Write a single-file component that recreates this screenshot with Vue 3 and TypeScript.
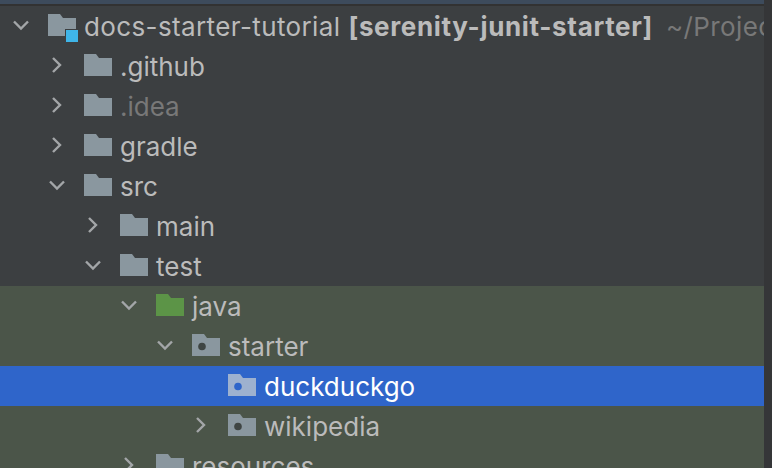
<script setup lang="ts">
type Kind = 'module' | 'folder' | 'source' | 'package'
interface Row {
  depth: number
  arrow: 'open' | 'closed' | 'none'
  kind: Kind
  name: string
  tone?: 'dim' | 'sel'
  tint?: boolean
  tag?: string
  path?: string
}
const rows: Row[] = [
  { depth: 0, arrow: 'open', kind: 'module', name: 'docs-starter-tutorial', tag: '[serenity-junit-starter]', path: '~/Projects/docs' },
  { depth: 1, arrow: 'closed', kind: 'folder', name: '.github' },
  { depth: 1, arrow: 'closed', kind: 'folder', name: '.idea', tone: 'dim' },
  { depth: 1, arrow: 'closed', kind: 'folder', name: 'gradle' },
  { depth: 1, arrow: 'open', kind: 'folder', name: 'src' },
  { depth: 2, arrow: 'closed', kind: 'folder', name: 'main' },
  { depth: 2, arrow: 'open', kind: 'folder', name: 'test' },
  { depth: 3, arrow: 'open', kind: 'source', name: 'java', tint: true },
  { depth: 4, arrow: 'open', kind: 'package', name: 'starter', tint: true },
  { depth: 5, arrow: 'none', kind: 'package', name: 'duckduckgo', tone: 'sel', tint: true },
  { depth: 5, arrow: 'closed', kind: 'package', name: 'wikipedia', tint: true },
  { depth: 3, arrow: 'closed', kind: 'folder', name: 'resources', tint: true },
]
const folderPath = 'M0 0H12L15 4H28V22H0Z'
</script>

<template>
  <div class="window">
    <div class="main">
      <div class="titlebar"></div>
      <div class="tree">
        <div
          v-for="row in rows"
          :key="row.name"
          class="row"
          :class="{ tint: row.tint, sel: row.tone === 'sel', dim: row.tone === 'dim', root: row.kind === 'module' }"
          :style="{ paddingLeft: 12 + row.depth * 36 + 'px' }"
        >
          <svg class="arrow" width="18" height="18" viewBox="0 0 18 18">
            <path v-if="row.arrow === 'open'" d="M2 4.500 L9 11.500 L16 4.500" />
            <path v-else-if="row.arrow === 'closed'" d="M5 1 L12 8 L5 15" />
          </svg>
          <svg class="icon" width="32" height="30" viewBox="0 0 32 30">
            <path class="fold" :class="row.kind" :d="folderPath" />
            <circle v-if="row.kind === 'package'" class="dot" cx="10" cy="12.500" r="3.800" />
            <template v-if="row.kind === 'module'">
              <rect class="cut" x="17" y="15" width="15" height="15" />
              <rect class="blue" x="18" y="16" width="12" height="12" />
            </template>
          </svg>
          <span class="name">{{ row.name }}</span>
          <span v-if="row.tag" class="tag">{{ row.tag }}</span>
          <span v-if="row.path" class="path">{{ row.path }}</span>
        </div>
      </div>
    </div>
    <div class="scroll"></div>
  </div>
</template>

<style>
html, body { margin: 0; background: #3c3f41; overflow: hidden; }
</style>

<style scoped>
.window {
  width: 772px;
  height: 468px;
  overflow: hidden;
  display: flex;
  background: #3c3f41;
  font-family: Inter, "Liberation Sans", sans-serif;
}
.main { flex: 1; min-width: 0; display: flex; flex-direction: column; }
.titlebar {
  flex: none;
  height: 6px;
  box-sizing: border-box;
  background: #3d4b5c;
  border-bottom: 2px solid #323232;
}
.tree { flex: 1; min-height: 0; overflow: hidden; }
.scroll { flex: none; width: 8px; background: #353638; }
.row {
  height: 40px;
  box-sizing: border-box;
  display: flex;
  align-items: flex-start;
  white-space: nowrap;
  overflow: hidden;
  font-size: 26px;
  line-height: 42px;
  color: #bbbbbb;
}
.row.root { letter-spacing: 0.38px; }
.row.tint { background: #4b5549; }
.row.sel { background: #2f65ca; color: #ffffff; }
.row.dim { color: #787878; }
.arrow { flex: none; margin-top: 11px; margin-right: 18px; fill: none; stroke: #a3a6a8; stroke-width: 2.400; }
.icon { flex: none; margin-top: 8px; margin-right: 4px; }
.fold { fill: #8a979f; }
.fold.source { fill: #5c9447; }
.dot { fill: #3f4543; }
.sel .fold { fill: #9eb1cf; }
.sel .dot { fill: #2f65ca; }
.cut { fill: #3c3f41; }
.blue { fill: #3fb5e8; }
.tag { font-weight: 700; margin-left: 8px; letter-spacing: 0.66px; }
.path { color: #787878; margin-left: 13px; }
</style>
